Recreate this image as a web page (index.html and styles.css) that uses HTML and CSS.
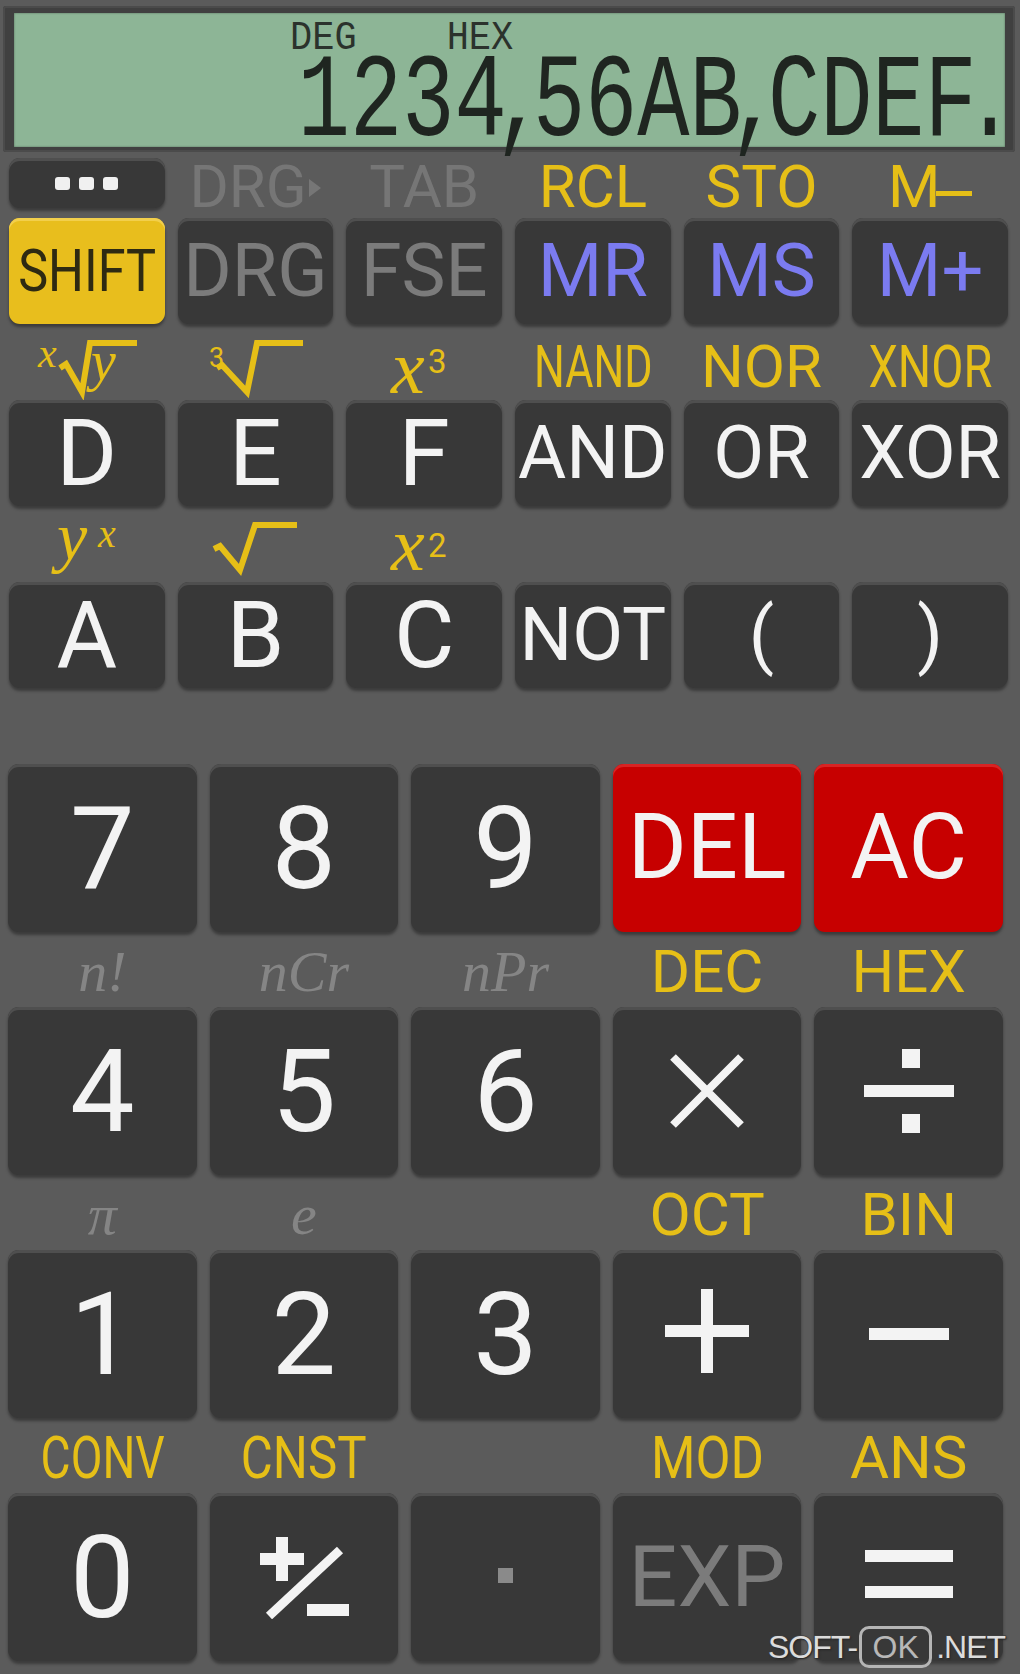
FILE: index.html
```html
<!DOCTYPE html>
<html>
<head>
<meta charset="utf-8">
<title>Calculator</title>
<link rel="stylesheet" href="styles.css">
</head>
<body>
<div class="lcd-frame">
  <div class="lcd">
    <div class="ind"><span>DEG</span><span>HEX</span></div>
    <div class="num"><span class="num-in">1234<span class="sep">,</span>56AB<span class="sep">,</span>CDEF<span class="sep">.</span></span></div>
  </div>
</div>

<div class="pad pad-top">
  <!-- row 0 -->
  <div class="key key-dots"><i></i><i></i><i></i></div>
  <div class="lab lab0 c-dim">DRG<svg class="tri" width="14" height="22" viewBox="0 0 14 22"><path d="M1 2 L13 11 L1 20 Z" fill="#767676"/></svg></div>
  <div class="lab lab0 c-dim">TAB</div>
  <div class="lab lab0 c-yel">RCL</div>
  <div class="lab lab0 c-yel">STO</div>
  <div class="lab lab0 c-yel">M<span class="mdash"></span></div>
  <!-- row 1 -->
  <div class="key key-shift"><span class="kt kt-shift">SHIFT</span></div>
  <div class="key"><span class="kt kt-md c-key-dim">DRG</span></div>
  <div class="key"><span class="kt kt-md c-key-dim">FSE</span></div>
  <div class="key"><span class="kt kt-md c-blue">MR</span></div>
  <div class="key"><span class="kt kt-md c-blue">MS</span></div>
  <div class="key"><span class="kt kt-md c-blue">M+</span></div>
  <!-- row 2 labels -->
  <div class="lab-math">
    <svg width="110" height="76" viewBox="0 0 110 76">
      <text x="6" y="43" class="m-it" font-size="42">x</text>
      <path d="M28 44 L34 40 L50 68 L58 19 L105 19" class="m-rad"/>
      <text x="59" y="56" class="m-it" font-size="56">y</text>
    </svg>
  </div>
  <div class="lab-math">
    <svg width="110" height="76" viewBox="0 0 110 76">
      <text x="9" y="43" class="m-sans" font-size="27">3</text>
      <path d="M17 44 L22 41 L47 68 L57 19 L103 19" class="m-rad"/>
    </svg>
  </div>
  <div class="lab-math">
    <svg width="110" height="76" viewBox="0 0 110 76">
      <text x="22" y="69" class="m-it" font-size="76">x</text>
      <text x="59" y="49" class="m-sans" font-size="33">3</text>
    </svg>
  </div>
  <div class="lab lab-up c-yel"><span class="sx n72">NAND</span></div>
  <div class="lab lab-up c-yel">NOR</div>
  <div class="lab lab-up c-yel"><span class="sx n78">XNOR</span></div>
  <!-- row 3 keys -->
  <div class="key"><span class="kt kt-lg">D</span></div>
  <div class="key"><span class="kt kt-lg">E</span></div>
  <div class="key"><span class="kt kt-lg">F</span></div>
  <div class="key"><span class="kt kt-word">AND</span></div>
  <div class="key"><span class="kt kt-word">OR</span></div>
  <div class="key"><span class="kt kt-word">XOR</span></div>
  <!-- row 4 labels -->
  <div class="lab-math">
    <svg width="110" height="76" viewBox="0 0 110 76">
      <text x="25" y="54" class="m-it" font-size="68">y</text>
      <text x="66" y="41" class="m-it" font-size="40">x</text>
    </svg>
  </div>
  <div class="lab-math">
    <svg width="110" height="76" viewBox="0 0 110 76">
      <path d="M14 43 L20 40 L40 64 L55 19 L97 19" class="m-rad"/>
    </svg>
  </div>
  <div class="lab-math">
    <svg width="110" height="76" viewBox="0 0 110 76">
      <text x="22" y="64" class="m-it" font-size="76">x</text>
      <text x="59" y="51" class="m-sans" font-size="33">2</text>
    </svg>
  </div>
  <div class="lab"></div>
  <div class="lab"></div>
  <div class="lab"></div>
  <!-- row 5 keys -->
  <div class="key"><span class="kt kt-lg">A</span></div>
  <div class="key"><span class="kt kt-lg">B</span></div>
  <div class="key"><span class="kt kt-lg">C</span></div>
  <div class="key"><span class="kt kt-word">NOT</span></div>
  <div class="key"><span class="kt kt-word">(</span></div>
  <div class="key"><span class="kt kt-word">)</span></div>
</div>

<div class="pad pad-num">
  <!-- row 7 8 9 -->
  <div class="key"><span class="kt kt-num">7</span></div>
  <div class="key"><span class="kt kt-num">8</span></div>
  <div class="key"><span class="kt kt-num">9</span></div>
  <div class="key key-red"><span class="kt kt-red">DEL</span></div>
  <div class="key key-red"><span class="kt kt-red">AC</span></div>
  <!-- labels -->
  <div class="lab lab-num c-serif">n!</div>
  <div class="lab lab-num c-serif">nCr</div>
  <div class="lab lab-num c-serif">nPr</div>
  <div class="lab lab-num c-yel">DEC</div>
  <div class="lab lab-num c-yel">HEX</div>
  <!-- row 4 5 6 -->
  <div class="key"><span class="kt kt-num">4</span></div>
  <div class="key"><span class="kt kt-num">5</span></div>
  <div class="key"><span class="kt kt-num">6</span></div>
  <div class="key">
    <svg width="80" height="80" viewBox="0 0 80 80" class="op"><path d="M6 6 L74 74 M74 6 L6 74" stroke="#f3f3f3" stroke-width="8"/></svg>
  </div>
  <div class="key">
    <svg width="90" height="84" viewBox="0 0 90 84" class="op"><rect x="38" y="0" width="18" height="19" fill="#f3f3f3"/><rect x="0" y="36" width="90" height="12" fill="#f3f3f3"/><rect x="38" y="65" width="18" height="19" fill="#f3f3f3"/></svg>
  </div>
  <!-- labels -->
  <div class="lab lab-num c-serif">π</div>
  <div class="lab lab-num c-serif">e</div>
  <div class="lab lab-num"></div>
  <div class="lab lab-num c-yel">OCT</div>
  <div class="lab lab-num c-yel">BIN</div>
  <!-- row 1 2 3 -->
  <div class="key"><span class="kt kt-num">1</span></div>
  <div class="key"><span class="kt kt-num">2</span></div>
  <div class="key"><span class="kt kt-num">3</span></div>
  <div class="key">
    <svg width="84" height="84" viewBox="0 0 84 84" class="op op-plus"><rect x="36" y="0" width="12" height="84" fill="#f3f3f3"/><rect x="0" y="36" width="84" height="12" fill="#f3f3f3"/></svg>
  </div>
  <div class="key">
    <svg width="80" height="12" viewBox="0 0 80 12" class="op"><rect x="0" y="0" width="80" height="12" fill="#f3f3f3"/></svg>
  </div>
  <!-- labels -->
  <div class="lab lab-num c-yel"><span class="sx n77">CONV</span></div>
  <div class="lab lab-num c-yel"><span class="sx n82">CNST</span></div>
  <div class="lab lab-num"></div>
  <div class="lab lab-num c-yel"><span class="sx n85">MOD</span></div>
  <div class="lab lab-num c-yel">ANS</div>
  <!-- row 0 -->
  <div class="key"><span class="kt kt-num">0</span></div>
  <div class="key">
    <svg width="92" height="84" viewBox="0 0 92 84" class="op"><rect x="18" y="2" width="12" height="44" fill="#f3f3f3"/><rect x="2" y="18" width="44" height="12" fill="#f3f3f3"/><path d="M82 15 L11 81" stroke="#f3f3f3" stroke-width="9"/><rect x="49" y="69" width="42" height="12" fill="#f3f3f3"/></svg>
  </div>
  <div class="key"><span class="dot"></span></div>
  <div class="key"><span class="kt kt-exp c-key-dim">EXP</span></div>
  <div class="key">
    <svg width="88" height="48" viewBox="0 0 88 48" class="op op-eq"><rect x="0" y="0" width="88" height="12" fill="#f3f3f3"/><rect x="0" y="36" width="88" height="12" fill="#f3f3f3"/></svg>
  </div>
</div>

<div class="wm"><span class="wm-t">SOFT-</span><span class="wm-ok">OK</span><span class="wm-t">.NET</span></div>
</body>
</html>
```

FILE: styles.css
```css
html, body {
  margin: 0;
  padding: 0;
}
body {
  width: 1020px;
  height: 1674px;
  background: #5b5b5b;
  font-family: Roboto, "Noto Sans", sans-serif;
  position: relative;
  overflow: hidden;
}

/* LCD */
.lcd-frame {
  margin: 6px 5px 0 3px;
  height: 146px;
  box-sizing: border-box;
  padding: 7px 10px 5px 11px;
  background: #404040;
  border-radius: 3px;
  box-shadow: inset 0 0 0 2px #4b4b4b;
}
.lcd {
  height: 100%;
  background: #8db596;
  display: flex;
  flex-direction: column;
  box-shadow: inset 0 0 2px rgba(0, 0, 0, 0.45);
}
.ind {
  display: flex;
  gap: 90px;
  padding-left: 276px;
  margin-top: 10px;
  font-family: "Liberation Mono", monospace;
  font-size: 37px;
  line-height: 30px;
  color: #2b322c;
}
.ind span {
  display: inline-block;
  transform: scaleY(1.1);
}
.num {
  margin-top: auto;
  margin-bottom: 4px;
  text-align: right;
  padding-right: 2px;
  font-family: "Liberation Mono", monospace;
  font-size: 87px;
  line-height: 62px;
  color: #1f2520;
  white-space: nowrap;
}
.num-in {
  display: inline-block;
  transform: scaleY(1.36);
  transform-origin: 50% 54px;
}
.sep {
  margin-left: -13px;
  letter-spacing: -13px;
}

/* pads */
.pad {
  display: grid;
  column-gap: 13px;
}
.pad-top {
  margin-top: 4px;
  padding: 0 12px 0 9px;
  grid-template-columns: repeat(6, minmax(0, 1fr));
  grid-template-rows: 62px 106px 76px 106px 76px 106px;
}
.pad-num {
  padding: 76px 17px 0 8px;
  grid-template-columns: repeat(5, minmax(0, 1fr));
  grid-template-rows: 168px 75px 168px 75px 168px 75px 168px;
}

/* keys */
.key {
  background: #383838;
  border-radius: 11px;
  box-shadow: inset 0 3px 0 #4f4f4f, 0 3px 3px rgba(0, 0, 0, 0.35);
  display: flex;
  align-items: center;
  justify-content: center;
  color: #f3f3f3;
  line-height: 1;
  min-width: 0;
}
.key-dots {
  height: 50px;
  align-self: start;
  margin-top: 2px;
  gap: 9px;
}
.key-dots i {
  display: block;
  width: 15px;
  height: 13px;
  border-radius: 3px;
  background: #f0f0f0;
}
.key-shift {
  background: #e8be1d;
  box-shadow: inset 0 3px 0 #f2cf4c, 0 3px 3px rgba(0, 0, 0, 0.35);
  color: #2e2a12;
}
.key-red {
  background: #c70000;
  box-shadow: inset 0 3px 0 #d82424, 0 3px 3px rgba(0, 0, 0, 0.35);
}

.kt {
  display: inline-block;
  white-space: nowrap;
}
.kt-shift {
  font-size: 60px;
  transform: scaleX(0.84);
}
.kt-md {
  font-size: 74px;
}
.kt-lg {
  font-size: 93px;
}
.kt-word {
  font-size: 74px;
}
.kt-num {
  font-size: 115px;
}
.kt-red {
  font-size: 90px;
}
.kt-exp {
  font-size: 86px;
}
.c-key-dim {
  color: #7b7b7b;
}
.c-blue {
  color: #7b7bf0;
}

.op {
  display: block;
}
.op-eq {
  margin-top: -6px;
}
.op-plus {
  margin-top: -6px;
}
.dot {
  display: block;
  width: 15px;
  height: 15px;
  background: #8a8a8a;
  margin-top: -4px;
}

/* labels */
.lab {
  display: flex;
  align-items: center;
  justify-content: center;
  font-size: 60px;
  line-height: 1;
  white-space: nowrap;
  min-width: 0;
}
.lab-up {
  padding-top: 10px;
}
.lab-num {
  padding-top: 4px;
}
.lab-math {
  display: flex;
  justify-content: center;
  min-width: 0;
}
.lab-math svg {
  display: block;
}
.c-yel {
  color: #e6bf17;
}
.c-dim {
  color: #767676;
}
.c-serif {
  color: #858585;
  font-family: "Liberation Serif", serif;
  font-style: italic;
  font-size: 58px;
}
.tri {
  margin-left: 1px;
  margin-top: 2px;
}
.mdash {
  display: inline-block;
  width: 36px;
  height: 5px;
  background: #e6bf17;
  margin-left: -4px;
  margin-top: 12px;
}
.sx {
  display: inline-block;
}
.n72 { transform: scaleX(0.72); }
.n77 { transform: scaleX(0.77); }
.n78 { transform: scaleX(0.78); }
.n82 { transform: scaleX(0.82); }
.n85 { transform: scaleX(0.85); }

.m-it {
  font-family: "Liberation Serif", serif;
  font-style: italic;
  fill: #e6bf17;
}
.m-sans {
  font-family: Roboto, sans-serif;
  fill: #e6bf17;
}
.m-rad {
  fill: none;
  stroke: #e6bf17;
  stroke-width: 6;
  stroke-linejoin: miter;
}

/* watermark overlay */
.wm {
  position: absolute;
  left: 768px;
  top: 1626px;
  display: flex;
  align-items: center;
  font-family: "Liberation Sans", Arial, sans-serif;
  font-size: 32px;
  line-height: 1;
}
.wm-t {
  color: #dcdcdc;
  letter-spacing: -1px;
  -webkit-text-stroke: 1.5px #444;
  paint-order: stroke fill;
  text-shadow: 1px 1px 2px #222;
}
.wm-ok {
  box-sizing: border-box;
  width: 73px;
  height: 42px;
  border: 3px solid #b5b5b5;
  border-radius: 10px;
  display: flex;
  align-items: center;
  justify-content: center;
  color: #b8b8b8;
  margin: 0 4px 0 2px;
}
```
